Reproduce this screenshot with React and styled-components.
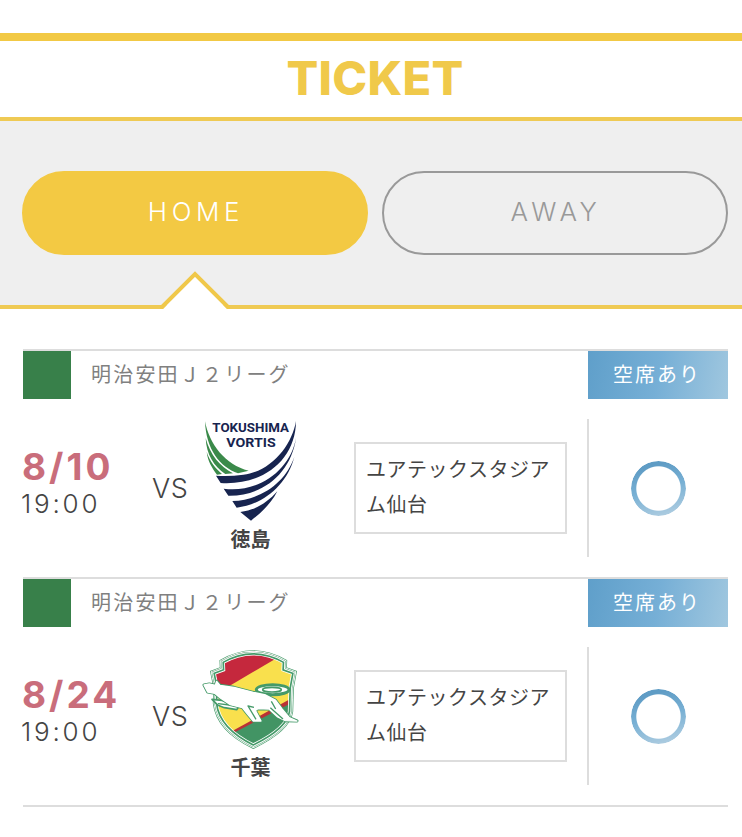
import { useState } from "react";
import styled, { createGlobalStyle } from "styled-components";

const jp = `"Noto Sans CJK JP", sans-serif`
const latin = `Inter, "Noto Sans CJK JP", sans-serif`

const matches = [
    { id: 1, league: "明治安田Ｊ２リーグ", date: "8/10", time: "19:00", team: "徳島", Crest: Vortis, place: "ユアテックスタジアム仙台", seats: "空席あり" },
    { id: 2, league: "明治安田Ｊ２リーグ", date: "8/24", time: "19:00", team: "千葉", Crest: Jef, place: "ユアテックスタジアム仙台", seats: "空席あり" }
]

export default function App() {

    const [tab, setTab] = useState("HOME")

    return (
        <Page>
            <GlobalStyle />
            <Header>
                <Title>TICKET</Title>
            </Header>
            <Tabs>
                <Tab $active={tab === "HOME"} onClick={() => setTab("HOME")}>HOME</Tab>
                <Tab $active={tab === "AWAY"} onClick={() => setTab("AWAY")}>AWAY</Tab>
                <Arrow $right={tab === "AWAY"} viewBox="0 0 70 39">
                    <path d="M3 39 L35 6 L67 39Z" fill="#fff" />
                    <path d="M0 37 H2 L35 4 L68 37 H70" fill="none" stroke="#f0c84a" strokeWidth="4" />
                </Arrow>
            </Tabs>
            <List>
                {matches.map(m => <Match key={m.id} {...m} />)}
            </List>
        </Page>
    );
}

function Match({ league, date, time, team, Crest, place, seats }) {
    return (
        <Row>
            <RowHead>
                <Mark />
                <League>{league}</League>
                <Badge>{seats}</Badge>
            </RowHead>
            <RowBody>
                <When>
                    <Day>{date}</Day>
                    <Time>{time}</Time>
                </When>
                <Versus>VS</Versus>
                <Team>
                    <Crest />
                    <TeamName>{team}</TeamName>
                </Team>
                <Place>{place}</Place>
                <Status>
                    <Ring />
                </Status>
            </RowBody>
        </Row>
    )
}

function Vortis() {
    return (
        <CrestSvg viewBox="36 30 312 306">
            <g fill="#3b8a4a">
                <path d="M45 34 C58 102 106 166 176 182 L144 190 C90 172 48 118 45 34Z" />
                <path d="M47 84 C60 134 90 170 129 190 L106 192 C72 169 49 134 47 84Z" />
                <path d="M50 126 C61 157 76 175 96 192 L81 194 C66 174 54 155 50 126Z" />
            </g>
            <g fill="#17244f">
                <path d="M318 33 C306 104 246 184 160 194 Q118 200 78 197 L92 219 C220 227 317 150 318 33Z" />
                <path d="M318 84 C302 178 208 250 101 236 L115 257 C222 259 304 186 318 84Z" />
                <path d="M313 140 C288 216 214 270 127 273 L140 293 C216 285 292 226 313 140Z" />
                <path d="M262 244 C232 278 197 300 151 306 L183 332 C211 310 243 282 262 244Z" />
            </g>
            <CrestText x="182" y="66" textLength="230" lengthAdjust="spacingAndGlyphs">TOKUSHIMA</CrestText>
            <CrestText x="183" y="112" textLength="148" lengthAdjust="spacingAndGlyphs">VORTIS</CrestText>
        </CrestSvg>
    )
}

function Jef() {
    const shield = "M93 63 Q190 7 287 63 L286 85 L316 96 L307 145 L305 215 Q298 270 190 322 Q82 270 73 190 L75 145 L65 96 L94 85Z"
    const body = "M42 135 L58 132 L76 136 L80 124 L90 136 L132 142 L190 157 L227 165 L256 180 L276 207 L298 233 L321 243 L286 242 L263 231 L237 207 L204 206 L196 211 L213 243 L190 243 L173 223 L157 203 L121 194 L91 174 L74 160 L53 156Z"
    return (
        <CrestSvg viewBox="36 24 312 306">
            <defs>
                <clipPath id="shield"><path d={shield} /></clipPath>
            </defs>
            <path d={shield} fill="none" stroke="#459a69" strokeWidth="9" />
            <path d={shield} fill="#f9e04d" stroke="#fff" strokeWidth="5" />
            <g clipPath="url(#shield)">
                <path d="M60 20 H300 L262 53 L118 138 L60 165Z" fill="#c5283d" />
                <path d="M120 277 L310 172 V194 L120 291Z" fill="#b93236" />
                <path d="M120 284 L310 186 V330 H110Z" fill="#429464" />
                <path d={shield} fill="none" stroke="#fff" strokeWidth="23" />
                <path d={shield} fill="none" stroke="#459a69" strokeWidth="18" />
                <path d={shield} fill="none" stroke="#fff" strokeWidth="8" />
                <path d={shield} fill="none" stroke="#459a69" strokeWidth="2" />
            </g>
            <g stroke="#459a69" strokeLinejoin="round">
                <path d="M66 178 L96 181 L128 190 L150 195 L140 209 L103 203 L84 196Z" fill="#fff" strokeWidth="5" />
                <path d="M84 191 L118 195" fill="none" strokeWidth="4" />
                <ellipse cx="248" cy="149" rx="49" ry="15" fill="#fff" strokeWidth="9" />
                <ellipse cx="246" cy="149" rx="28" ry="7" fill="#fff" strokeWidth="5" />
                <path d={body} fill="none" strokeWidth="9" />
                <path d={body} fill="#fff" stroke="#fff" strokeWidth="4" />
                <path d="M192 202 L174 198 L198 238 M241 203 L279 237 M244 184 L257 207" fill="none" strokeWidth="4" />
            </g>
        </CrestSvg>
    )
}

const GlobalStyle = createGlobalStyle`
* {
box-sizing: border-box;
}
body {
margin: 0;
background: #fff;
}
`

const Page = styled.div`
width: 742px;
min-height: 837px;
padding-top: 33px;
background: #fff;
color: #444;
font-family: ${jp};
`

const Header = styled.header`
display: flex;
justify-content: center;
height: 88px;
border-top: 8px solid #f2c945;
border-bottom: 4px solid #efca54;
`

const Title = styled.h1`
margin: 0 0 0 8px;
font-family: ${latin};
font-size: 47px;
line-height: 74px;
font-weight: 800;
letter-spacing: 0.3px;
color: #f0c94a;
`

const Tabs = styled.nav`
position: relative;
display: grid;
grid-template-columns: 346px 346px;
gap: 14px;
height: 188px;
padding: 50px 0 0 22px;
background: #efefef;
border-bottom: 4px solid #efca54;
`

const Tab = styled.button`
height: 84px;
padding: 0 0 3px 2px;
border: 2px solid ${p => p.$active ? "#f3c943" : "#999"};
border-radius: 42px;
background: ${p => p.$active ? "#f3c943" : "transparent"};
color: ${p => p.$active ? "#fff" : "#999"};
font-family: ${latin};
font-size: 26px;
font-weight: 300;
letter-spacing: 4.6px;
`

const Arrow = styled.svg`
position: absolute;
left: ${p => p.$right ? 520 : 160}px;
bottom: -4px;
width: 70px;
height: 39px;
`

const List = styled.main`
margin: 40px 14px 0 23px;
border-bottom: 2px solid #ddd;
`

const Row = styled.section`
height: 228px;
border-top: 2px solid #ddd;
`

const RowHead = styled.div`
display: flex;
height: 48px;
line-height: 46px;
`

const Mark = styled.div`
width: 48px;
background: #38804a;
`

const League = styled.div`
flex: 1;
padding-left: 20px;
font-size: 20px;
letter-spacing: 2.2px;
color: #808080;
`

const Badge = styled.div`
width: 140px;
padding-right: 2px;
text-align: center;
font-size: 20px;
letter-spacing: 2px;
color: #fff;
background: linear-gradient(100deg, #5f9fca, #76afd6 50%, #a0c7df);
`

const RowBody = styled.div`
display: grid;
grid-template-columns: 129px 50px 152px 213px 20px 141px;
height: 138px;
margin-top: 20px;
`

const When = styled.div`
margin-left: -2px;
padding-top: 27px;
font-family: ${latin};
`

const Day = styled.div`
padding-left: 1px;
font-size: 37px;
line-height: 42px;
font-weight: 700;
letter-spacing: 3px;
color: #c96d7b;
`

const Time = styled.div`
font-size: 26px;
line-height: 32px;
font-weight: 300;
letter-spacing: 2.8px;
`

const Versus = styled.div`
padding-top: 53px;
font-family: ${latin};
font-size: 27px;
line-height: 34px;
font-weight: 300;
letter-spacing: 0.5px;
`

const Team = styled.div`
display: flex;
flex-direction: column;
width: 97px;
padding-top: 1px;
`

const CrestSvg = styled.svg`
display: block;
flex: none;
width: 104px;
height: 102px;
overflow: visible;
`

const CrestText = styled.text`
font-family: Roboto, sans-serif;
font-size: 39px;
font-weight: 700;
text-anchor: middle;
fill: #17244f;
`

const TeamName = styled.div`
padding-top: 1px;
font-size: 20px;
line-height: 32px;
font-weight: 700;
text-align: center;
`

const Place = styled.div`
height: 92px;
margin-top: 23px;
padding: 8px 10px;
border: 2px solid #ddd;
font-size: 20px;
line-height: 34.5px;
letter-spacing: 0.5px;
`

const Status = styled.div`
grid-column: 6;
display: flex;
align-items: center;
justify-content: center;
border-left: 2px solid #ddd;
`

const Ring = styled.div`
width: 55px;
height: 55px;
border-radius: 50%;
background: linear-gradient(165deg, #5f9cc5 15%, #78b0d4 50%, #abcbe0 90%);
mask: radial-gradient(circle, transparent 21.7px, #000 22.7px);
`
